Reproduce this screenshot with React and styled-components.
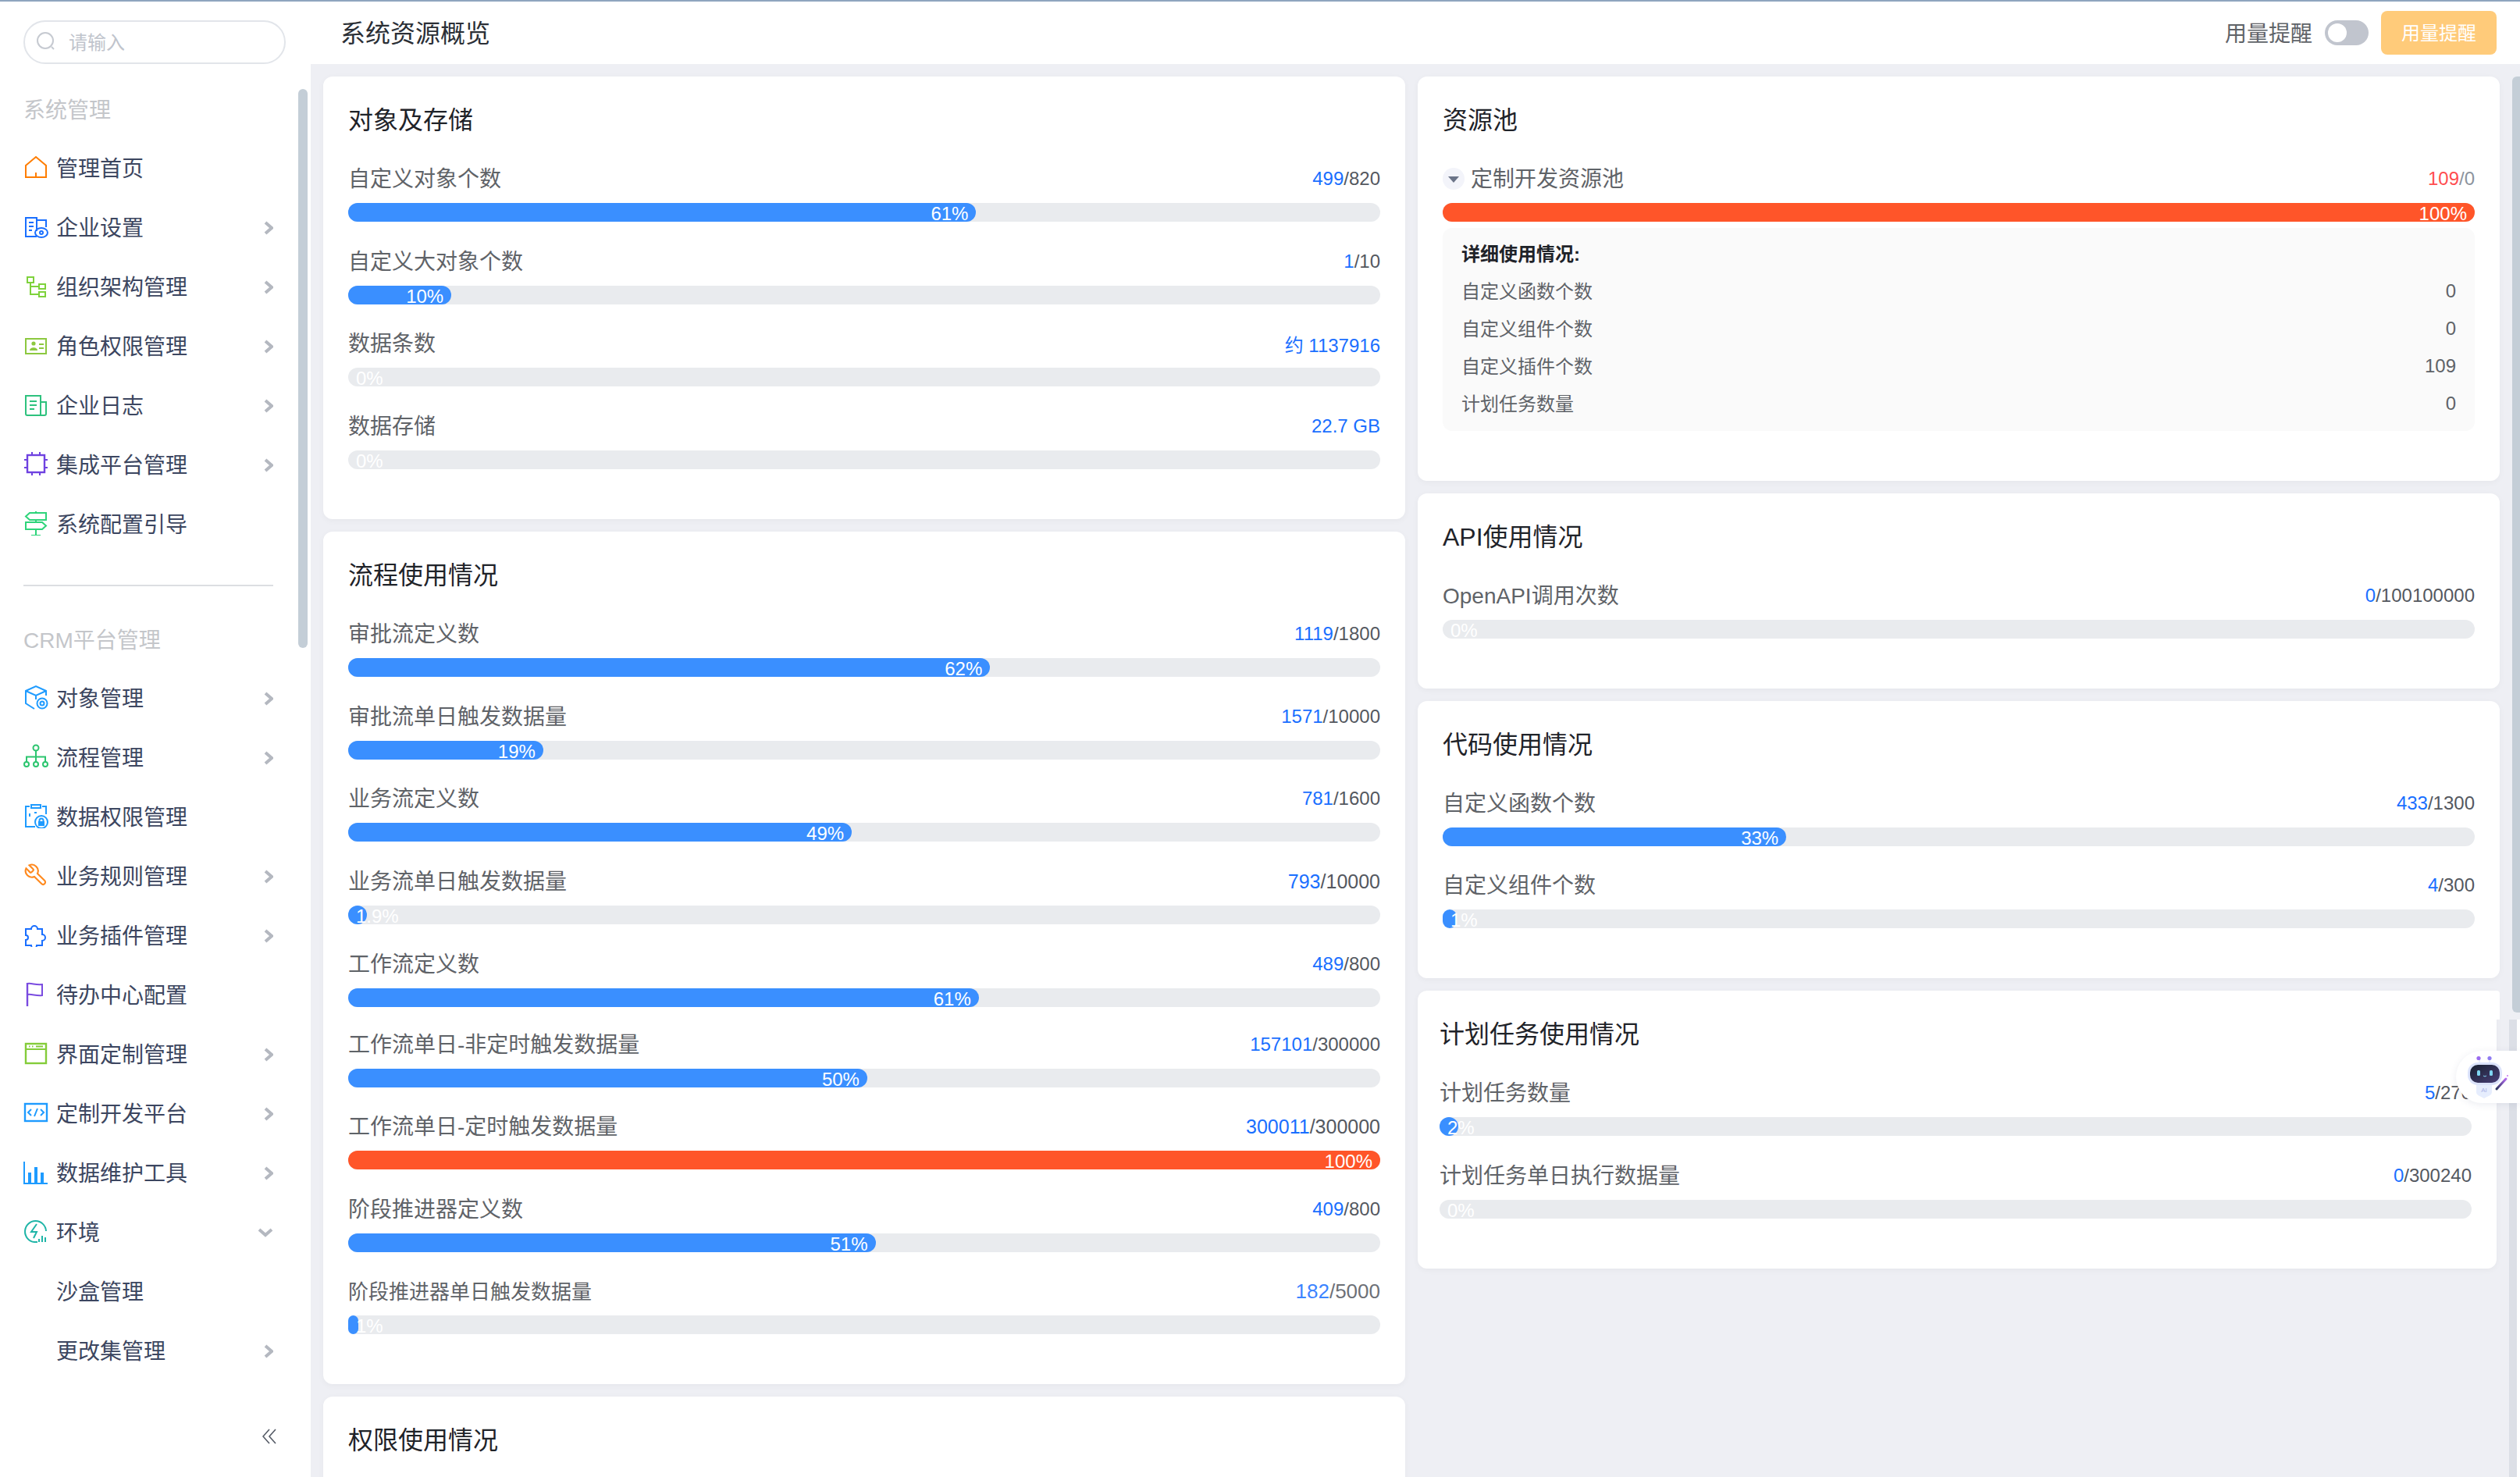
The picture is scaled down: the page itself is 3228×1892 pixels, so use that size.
import React from 'react';
import styled, { createGlobalStyle } from 'styled-components';

const GlobalStyle = createGlobalStyle`
  html, body {
    margin: 0;
    padding: 0;
    background: #eeeff4;
  }
  body {
    font-family: 'Liberation Sans', 'Noto Sans CJK SC', sans-serif;
    overflow: hidden;
  }
  * {
    box-sizing: border-box;
  }
`;

const Page = styled.div`
  display: flex;
  width: 3228px;
  height: 1892px;
  border-top: 2px solid #8fa5bf;
  overflow: hidden;
  position: relative;
`;

const Sidebar = styled.aside`
  width: 398px;
  flex: none;
  height: 100%;
  background: #fff;
  padding-top: 24px;
  position: relative;
`;

const SearchBox = styled.div`
  display: flex;
  align-items: center;
  gap: 16px;
  width: 336px;
  height: 56px;
  margin: 0 0 20px 30px;
  padding: 0 0 3px 14px;
  border: 2px solid #e2e5ea;
  border-radius: 28px;
  font-size: 24px;
  color: #c0c4cc;
`;

const GroupTitle = styled.div`
  display: flex;
  align-items: center;
  height: 74px;
  padding-left: 30px;
  font-size: 28px;
  color: #c4c6ca;
`;

const NavItem = styled.div`
  display: flex;
  align-items: center;
  height: 76px;
  padding: 0 48px 0 30px;
  font-size: 28px;
  color: #3c4660;
`;

const NavIcon = styled.svg`
  width: 32px;
  height: 32px;
  flex: none;
  margin-right: 10px;
  color: ${(p) => p.$color};
  fill: none;
  stroke: currentColor;
  stroke-width: 2;
`;

const NavText = styled.span`
  flex: 1;
  padding-left: ${(p) => (p.$plain ? '42px' : '0')};
`;

const ArrowIcon = styled.svg`
  flex: none;
  margin-top: 3px;
  fill: none;
  stroke: #b4b8c0;
  stroke-width: 4;
`;

const Divider = styled.div`
  height: 2px;
  width: 320px;
  margin: 41px 0 30px 30px;
  background: #dcdee2;
`;

const Collapse = styled.div`
  display: flex;
  justify-content: flex-end;
  margin-top: 62px;
  padding-right: 44px;
`;

const SideThumb = styled.div`
  position: absolute;
  left: 382px;
  top: 112px;
  width: 12px;
  height: 716px;
  border-radius: 6px;
  background: #c4ced7;
`;

const Main = styled.main`
  flex: 1;
  min-width: 0;
  display: flex;
  flex-direction: column;
`;

const TopBar = styled.header`
  display: flex;
  align-items: center;
  flex: none;
  height: 80px;
  padding: 0 30px 0 38px;
  background: #fff;
`;

const PageTitle = styled.h1`
  flex: 1;
  margin: 0 0 4px;
  font-size: 32px;
  font-weight: 400;
  color: #2b2f36;
`;

const RemindLabel = styled.span`
  font-size: 28px;
  color: #5f6368;
  margin: 0 16px 2px 0;
`;

const Toggle = styled.div`
  width: 56px;
  height: 32px;
  padding: 4px;
  border-radius: 16px;
  background: #c1c5ce;
  margin-right: 16px;
  &::before {
    content: '';
    display: block;
    width: 24px;
    height: 24px;
    border-radius: 50%;
    background: #fff;
  }
`;

const RemindButton = styled.button`
  width: 148px;
  height: 56px;
  padding: 0 0 3px;
  border: 0;
  border-radius: 8px;
  background: #ffcb7a;
  color: #fff;
  font-family: inherit;
  font-size: 24px;
`;

const Columns = styled.div`
  flex: 1;
  min-height: 0;
  display: grid;
  grid-template-columns: 1386px 1386px;
  gap: 16px;
  padding: 16px 16px 0;
  overflow: hidden;
  align-items: start;
`;

const Column = styled.div`
  display: flex;
  flex-direction: column;
  gap: 16px;
`;

const Card = styled.section`
  position: relative;
  background: #fff;
  border-radius: 12px;
  box-shadow: 0 2px 8px rgba(0, 0, 0, 0.04);
  padding: 32px 32px 64px;
`;

// the screenshot was stitched while scrolling: this card sits 4px off below its top strip
const ShiftedCard = styled(Card)`
  width: 1382px;
  padding-left: 28px;
  border-top-right-radius: 0;
  &::before {
    content: '';
    position: absolute;
    left: 100%;
    top: 0;
    width: 4px;
    height: 37px;
    background: #fff;
    border-top-right-radius: 12px;
  }
`;

const CardTitle = styled.h2`
  margin: 0;
  height: 48px;
  line-height: 48px;
  font-size: 32px;
  font-weight: 400;
  color: #1f2329;
`;

const Row = styled.div`
  padding-top: ${(p) => p.$gap ?? 29}px;
`;

const RowHead = styled.div`
  display: flex;
  align-items: center;
  height: 44px;
  margin-bottom: 9px;
`;

const RowLabel = styled.span`
  flex: 1;
  padding-bottom: 4px;
  font-size: ${(p) => p.$size ?? 28}px;
  color: #5f6368;
`;

const RowValue = styled.span`
  font-size: ${(p) => p.$size ?? 24}px;
  color: #54585f;
  opacity: ${(p) => (p.$soft ? 0.85 : 1)};
`;

const Used = styled.span`
  color: ${(p) => (p.$over ? '#ff4d4f' : '#1a6fff')};
`;

const Limit = styled.span`
  color: ${(p) => (p.$over ? '#8c939d' : '#54585f')};
`;

const Track = styled.div`
  height: 24px;
  border-radius: 12px;
  background: #e9ebee;
`;

const Fill = styled.div`
  height: 100%;
  border-radius: 12px;
  background: ${(p) => (p.$over ? '#ff5529' : '#3a8fff')};
`;

const FillText = styled.div`
  margin: 0 10px;
  font-size: 24px;
  line-height: 27px;
  color: #fff;
  text-align: right;
  white-space: nowrap;
`;

const Caret = styled.span`
  display: flex;
  align-items: center;
  justify-content: center;
  width: 28px;
  height: 28px;
  margin-right: 8px;
  border-radius: 50%;
  background: #f3f4fa;
  &::before {
    content: '';
    margin-top: 2px;
    border-style: solid;
    border-width: 8px 7px 0;
    border-color: #6b7488 transparent transparent;
  }
`;

const Detail = styled.div`
  margin-top: 8px;
  padding: 9px 24px 11px;
  border-radius: 12px;
  background: #fafafa;
`;

const DetailRow = styled.div`
  display: flex;
  justify-content: space-between;
  align-items: center;
  height: 48px;
  font-size: 24px;
  color: ${(p) => (p.$head ? '#1f2329' : '#5f6368')};
  font-weight: ${(p) => (p.$head ? 700 : 400)};
`;

const DetailLabel = styled.span`
  padding-bottom: 3px;
`;

const MainThumb = styled.div`
  position: absolute;
  left: 3218px;
  top: 96px;
  width: 10px;
  height: 1199px;
  border-radius: 6px 0 0 6px;
  background: #c4ced7;
`;

const LowerTrack = styled.div`
  position: absolute;
  left: 3214px;
  top: 1304px;
  bottom: 0;
  width: 14px;
  background: #dcdfe6;
  border-right: 4px solid #fff;
`;

const RobotBubble = styled.div`
  position: absolute;
  right: 0;
  top: 1344px;
  display: flex;
  align-items: center;
  width: 82px;
  height: 67px;
  padding-left: 14px;
  border-radius: 34px 0 0 34px;
  background: #fff;
  box-shadow: 0 2px 10px rgba(60, 70, 120, 0.1);
`;

const icons = {
  home: (
    <>
      <path d="M3 14 16 3l13 11v15H3Z" />
      <path d="M16 23v6" />
    </>
  ),
  setting: (
    <>
      <path d="M17 29H3V5h14v17" />
      <path d="M17 8h12v9" />
      <path d="M7 11h6M7 16h6M7 21h4" />
      <ellipse cx="23" cy="24" rx="8" ry="6" />
      <circle cx="23" cy="24" r="2" />
    </>
  ),
  org: (
    <>
      <rect x="5" y="5" width="8" height="7" />
      <rect x="20" y="14" width="8" height="6" />
      <rect x="20" y="24" width="8" height="6" />
      <path d="M9 12v15h11M9 17h11" />
    </>
  ),
  role: (
    <>
      <rect x="3" y="8" width="26" height="19" />
      <circle cx="13" cy="14" r="2.6" fill="currentColor" stroke="none" />
      <path d="M8 23c0-5 10-5 10 0Z" fill="currentColor" stroke="none" />
      <path d="M20 15h6M20 20h6" />
    </>
  ),
  log: (
    <>
      <path d="M22 30H5a2 2 0 0 1-2-2V5h19Z" />
      <path d="M22 13h7v15a2 2 0 0 1-2 2h-5" />
      <path d="M8 12h9M8 17h9M8 22h6" />
    </>
  ),
  chip: (
    <>
      <rect x="5" y="5" width="22" height="22" strokeWidth="2.4" />
      <path d="M11 1v4M21 1v4M11 27v4M21 27v4M1 11h4M1 21h4M27 11h4M27 21h4" />
    </>
  ),
  guide: (
    <>
      <path d="M8 3h21v9H8l-5-4.5Z" />
      <path d="M3 15h21l5 4.5-5 4.5H3Z" />
      <path d="M16 1v2M16 12v3M16 24v8M10 32h12" />
    </>
  ),
  object: (
    <>
      <path d="M29 14V8L16 2 3 8v16l11 7" />
      <path d="m3 8 13 6 13-6M16 14v5" />
      <circle cx="24" cy="24" r="6.5" />
      <circle cx="24" cy="24" r="2.5" />
    </>
  ),
  flow: (
    <>
      <circle cx="16" cy="5" r="3.5" />
      <path d="M16 8.5V23M4 23v-6.5h24V23" />
      <circle cx="4" cy="26" r="3" />
      <circle cx="16" cy="26" r="3" />
      <circle cx="28" cy="26" r="3" />
    </>
  ),
  dataAuth: (
    <>
      <path d="M8 4H3v26h12M24 4h5v10" />
      <rect x="10" y="2" width="12" height="4" />
      <path d="M8 13v4M14 12h3" />
      <circle cx="23" cy="24" r="8" />
      <rect x="19" y="23" width="8" height="6" fill="currentColor" stroke="none" />
      <path d="M20.5 23v-1a2.5 2.5 0 0 1 5 0v1" />
    </>
  ),
  rule: (
    <path
      transform="translate(32 0) scale(-1.33 1.33)"
      strokeWidth="1.6"
      d="M14.7 6.3a1 1 0 0 0 0 1.4l1.6 1.6a1 1 0 0 0 1.4 0l3.77-3.77a6 6 0 0 1-7.94 7.94l-6.91 6.91a2.12 2.12 0 0 1-3-3l6.91-6.91a6 6 0 0 1 7.94-7.94l-3.76 3.76z"
    />
  ),
  plugin: (
    <path d="M3 9h7a4 4 0 1 1 8 0h6v7a4 4 0 1 1 0 8v6h-7a3.5 3.5 0 0 1-7 0H3v-7a3 3 0 0 0 0-6Z" />
  ),
  todo: (
    <>
      <path d="M5 2v30" strokeWidth="2.4" />
      <path d="M5 3c6-1 10 2 19 1v14c-8 1-13-2-19-1" />
    </>
  ),
  ui: (
    <>
      <rect x="3" y="4" width="26" height="25" strokeWidth="2.4" />
      <path d="M3 11h26M7 7.5h1.5M11 7.5h1.5M16 7.5h9" />
    </>
  ),
  dev: (
    <>
      <rect x="2" y="5" width="28" height="22" strokeWidth="2.4" />
      <path d="m10 12-4 4 4 4M22 12l4 4-4 4M18 11l-4 10" />
    </>
  ),
  tools: (
    <>
      <path d="M1 3v28h30" />
      <rect x="6" y="17" width="4" height="14" fill="currentColor" stroke="none" />
      <rect x="14" y="10" width="4" height="21" fill="currentColor" stroke="none" />
      <rect x="22" y="17" width="4" height="14" fill="currentColor" stroke="none" />
    </>
  ),
  env: (
    <>
      <path d="M18 30h-4A13.5 13.5 0 1 1 29 16" />
      <path d="M17 7 10 17h7l-4 8" />
      <path d="M20 30v-4M24 30v-8M28 30v-6" />
    </>
  ),
};

const systemNav = [
  { icon: 'home', color: '#ff7d00', text: '管理首页' },
  { icon: 'setting', color: '#1a6fff', text: '企业设置', arrow: 'right' },
  { icon: 'org', color: '#7ed23c', text: '组织架构管理', arrow: 'right' },
  { icon: 'role', color: '#8cc83f', text: '角色权限管理', arrow: 'right' },
  { icon: 'log', color: '#2ec27e', text: '企业日志', arrow: 'right' },
  { icon: 'chip', color: '#6f42e0', text: '集成平台管理', arrow: 'right' },
  { icon: 'guide', color: '#2ed47a', text: '系统配置引导' },
];

const crmNav = [
  { icon: 'object', color: '#1e9bff', text: '对象管理', arrow: 'right' },
  { icon: 'flow', color: '#2cc56f', text: '流程管理', arrow: 'right' },
  { icon: 'dataAuth', color: '#1e9bff', text: '数据权限管理' },
  { icon: 'rule', color: '#ff8a1f', text: '业务规则管理', arrow: 'right' },
  { icon: 'plugin', color: '#1a6fff', text: '业务插件管理', arrow: 'right' },
  { icon: 'todo', color: '#7a4be0', text: '待办中心配置' },
  { icon: 'ui', color: '#84cc3a', text: '界面定制管理', arrow: 'right' },
  { icon: 'dev', color: '#1e9bff', text: '定制开发平台', arrow: 'right' },
  { icon: 'tools', color: '#1e9bff', text: '数据维护工具', arrow: 'right' },
  { icon: 'env', color: '#1fb5a7', text: '环境', arrow: 'down' },
  { text: '沙盒管理' },
  { text: '更改集管理', arrow: 'right' },
];

const objectRows = [
  { label: '自定义对象个数', used: '499', limit: '820', width: 60.85, pct: '61%' },
  { label: '自定义大对象个数', used: '1', limit: '10', width: 10, pct: '10%', gap: 29 },
  { label: '数据条数', used: '约 1137916', width: 0, pct: '0%', gap: 28 },
  { label: '数据存储', used: '22.7 GB', width: 0, pct: '0%' },
];

const flowRows = [
  { label: '审批流定义数', used: '1119', limit: '1800', width: 62.2, pct: '62%' },
  { label: '审批流单日触发数据量', used: '1571', limit: '10000', width: 18.9, pct: '19%' },
  { label: '业务流定义数', used: '781', limit: '1600', width: 48.8, pct: '49%', gap: 28 },
  { label: '业务流单日触发数据量', used: '793', limit: '10000', width: 1.85, pct: '1.9%', size: 25 },
  { label: '工作流定义数', used: '489', limit: '800', width: 61.1, pct: '61%' },
  { label: '工作流单日-非定时触发数据量', used: '157101', limit: '300000', width: 50.3, pct: '50%', gap: 26 },
  { label: '工作流单日-定时触发数据量', used: '300011', limit: '300000', width: 100, pct: '100%', gap: 28, over: true, size: 25 },
  { label: '阶段推进器定义数', used: '409', limit: '800', width: 51.1, pct: '51%' },
  { label: '阶段推进器单日触发数据量', used: '182', limit: '5000', width: 1, pct: '1%', gap: 28, size: 26, labelSize: 26, soft: true },
];

const detailRows = [
  { label: '自定义函数个数', value: 0 },
  { label: '自定义组件个数', value: 0 },
  { label: '自定义插件个数', value: 109 },
  { label: '计划任务数量', value: 0 },
];

const Arrow = ({ dir }) =>
  dir === 'down' ? (
    <ArrowIcon width="20" height="12" viewBox="0 0 20 12">
      <path d="m2 2 8 7 8-7" />
    </ArrowIcon>
  ) : (
    <ArrowIcon width="12" height="18" viewBox="0 0 12 18">
      <path d="m2 2 8 7-8 7" />
    </ArrowIcon>
  );

const NavRow = ({ icon, color, text, arrow }) => (
  <NavItem>
    {icon && (
      <NavIcon viewBox="0 0 32 32" $color={color}>
        {icons[icon]}
      </NavIcon>
    )}
    <NavText $plain={!icon}>{text}</NavText>
    {arrow && <Arrow dir={arrow} />}
  </NavItem>
);

const Progress = ({ width, pct, over }) => (
  <Track>
    <Fill $over={over} style={{ width: `${width}%` }}>
      <FillText>{pct}</FillText>
    </Fill>
  </Track>
);

const UsageRow = ({ label, used, limit, width, pct, gap, over, size, labelSize, soft }) => (
  <Row $gap={gap}>
    <RowHead>
      <RowLabel $size={labelSize}>{label}</RowLabel>
      <RowValue $size={size} $soft={soft}>
        <Used>{used}</Used>
        {limit && `/${limit}`}
      </RowValue>
    </RowHead>
    <Progress width={width} pct={pct} over={over} />
  </Row>
);

const Robot = () => (
  <svg width="54" height="56" viewBox="0 0 54 56">
    <defs>
      <linearGradient id="screen" x1="0" y1="0" x2="1" y2="1">
        <stop offset="0" stopColor="#16202e" />
        <stop offset="1" stopColor="#4a3f78" />
      </linearGradient>
      <linearGradient id="wand" x1="0" y1="1" x2="1" y2="0">
        <stop offset="0" stopColor="#2c3560" />
        <stop offset="1" stopColor="#b36bf0" />
      </linearGradient>
    </defs>
    <path d="M16 5v7M29 5v7" stroke="#d5dcf5" strokeWidth="1" />
    <circle cx="15" cy="3.5" r="2.6" fill="#9a6bf0" />
    <circle cx="29" cy="3.5" r="2.6" fill="#8f7bf2" />
    <path d="M12 39c0-4 3-5 10-5s10 1 10 5v8c0 4-5 5-10 8-5-3-10-4-10-8Z" fill="#e6edfd" />
    <text x="22" y="47" textAnchor="middle" fontSize="8" fill="#a9b3e6" fontFamily="Liberation Sans">
      AI
    </text>
    <rect x="1" y="9" width="44" height="29" rx="13" fill="#dbe3fb" />
    <rect x="4" y="12" width="38" height="23" rx="10" fill="url(#screen)" />
    <rect x="13" y="19" width="4" height="7" rx="1.5" fill="#7fd6f2" />
    <rect x="29" y="19" width="4" height="7" rx="1.5" fill="#7fd6f2" />
    <path d="M21 26q2 2 4 0" fill="none" stroke="#7fd6f2" strokeWidth="1" />
    <path d="M38 43 50 30" stroke="url(#wand)" strokeWidth="3" strokeLinecap="round" />
    <circle cx="52" cy="26" r="1" fill="#c774f0" />
  </svg>
);

const App = () => (
  <>
    <GlobalStyle />
    <Page>
      <Sidebar>
        <SearchBox>
          <svg width="26" height="26" viewBox="0 0 26 26" fill="none" stroke="#c6cad1" strokeWidth="2">
            <circle cx="12" cy="12" r="10" />
            <path d="m20 20 3 3" />
          </svg>
          请输入
        </SearchBox>
        <GroupTitle>系统管理</GroupTitle>
        {systemNav.map((item) => (
          <NavRow key={item.text} {...item} />
        ))}
        <Divider />
        <GroupTitle>CRM平台管理</GroupTitle>
        {crmNav.map((item) => (
          <NavRow key={item.text} {...item} />
        ))}
        <Collapse>
          <svg width="18" height="22" viewBox="0 0 18 22" fill="none" stroke="#555b66" strokeWidth="1.6">
            <path d="M9 2 1 11l8 9M17 2l-8 9 8 9" />
          </svg>
        </Collapse>
        <SideThumb />
      </Sidebar>
      <Main>
        <TopBar>
          <PageTitle>系统资源概览</PageTitle>
          <RemindLabel>用量提醒</RemindLabel>
          <Toggle />
          <RemindButton>用量提醒</RemindButton>
        </TopBar>
        <Columns>
          <Column>
            <Card>
              <CardTitle>对象及存储</CardTitle>
              {objectRows.map((row) => (
                <UsageRow key={row.label} {...row} />
              ))}
            </Card>
            <Card>
              <CardTitle>流程使用情况</CardTitle>
              {flowRows.map((row) => (
                <UsageRow key={row.label} {...row} />
              ))}
            </Card>
            <Card>
              <CardTitle>权限使用情况</CardTitle>
            </Card>
          </Column>
          <Column>
            <Card>
              <CardTitle>资源池</CardTitle>
              <Row>
                <RowHead>
                  <Caret />
                  <RowLabel>定制开发资源池</RowLabel>
                  <RowValue>
                    <Used $over>109</Used>
                    <Limit $over>/0</Limit>
                  </RowValue>
                </RowHead>
                <Progress width={100} pct="100%" over />
              </Row>
              <Detail>
                <DetailRow $head>
                  <DetailLabel>详细使用情况:</DetailLabel>
                </DetailRow>
                {detailRows.map((row) => (
                  <DetailRow key={row.label}>
                    <DetailLabel>{row.label}</DetailLabel>
                    <span>{row.value}</span>
                  </DetailRow>
                ))}
              </Detail>
            </Card>
            <Card>
              <CardTitle>API使用情况</CardTitle>
              <UsageRow label="OpenAPI调用次数" used="0" limit="100100000" width={0} pct="0%" />
            </Card>
            <Card>
              <CardTitle>代码使用情况</CardTitle>
              <UsageRow label="自定义函数个数" used="433" limit="1300" width={33.3} pct="33%" />
              <UsageRow label="自定义组件个数" used="4" limit="300" width={1.33} pct="1%" gap={28} />
            </Card>
            <ShiftedCard>
              <CardTitle>计划任务使用情况</CardTitle>
              <UsageRow label="计划任务数量" used="5" limit="270" width={1.85} pct="2%" />
              <UsageRow label="计划任务单日执行数据量" used="0" limit="300240" width={0} pct="0%" />
            </ShiftedCard>
          </Column>
        </Columns>
      </Main>
      <MainThumb />
      <LowerTrack />
      <RobotBubble>
        <Robot />
      </RobotBubble>
    </Page>
  </>
);

export default App;
